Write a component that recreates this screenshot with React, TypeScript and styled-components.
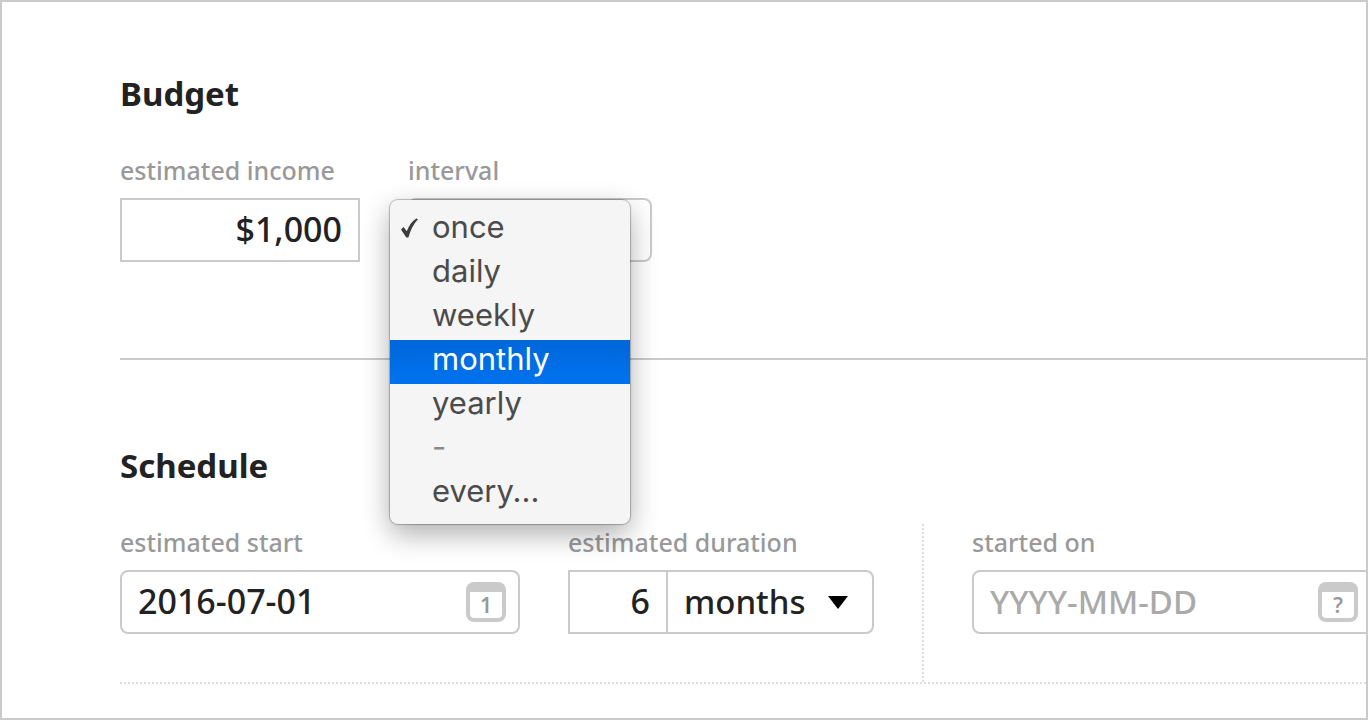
import React, { useState } from "react";
import styled, { createGlobalStyle, css } from "styled-components";

const GlobalStyle = createGlobalStyle`
  * { box-sizing: border-box; }
  body {
    margin: 0;
    background: #fff;
    color: #222;
    font-family: "Noto Sans", "Open Sans", sans-serif;
    font-weight: 500;
  }
`;

const line = "#cacaca";
const dotted = "2px dotted #dedede";

const Page = styled.main`
  min-height: 100vh;
  padding: 68px 0 34px 118px;
  border: 2px solid ${line};
  overflow: hidden;
`;

const Section = styled.section<{ $divided?: boolean }>`
  ${(p) =>
    p.$divided &&
    css`
      margin-top: 96px;
      padding-top: 82px;
      border-top: 2px solid ${line};
    `}
`;

const Heading = styled.h2`
  margin: 0 0 34px;
  font-size: 33px;
  font-weight: 700;
  line-height: 48px;
`;

const Fields = styled.div<{ $dotted?: boolean }>`
  display: flex;
  ${(p) => p.$dotted && `border-bottom: ${dotted};`}
`;

const Group = styled.div<{ $ruled?: boolean }>`
  display: flex;
  flex: none;
  gap: 48px;
  ${(p) =>
    p.$ruled &&
    css`
      padding: 0 48px 48px 0;
      margin-right: 48px;
      border-right: ${dotted};
    `}
`;

const Field = styled.div<{ $width: number }>`
  display: flex;
  flex-direction: column;
  flex: none;
  gap: 10px;
  width: ${(p) => p.$width}px;
`;

const Label = styled.label`
  color: #999;
  font-size: 25px;
  line-height: 36px;
  white-space: nowrap;
`;

const Control = styled.div`
  display: flex;
  position: relative;
`;

const boxStyle = css`
  height: 64px;
  min-width: 0;
  border: 2px solid ${line};
  background: #fff;
  color: #222;
  font: inherit;
  outline: none;
`;

const TextBox = styled.input<{ $align?: "right"; $joined?: boolean }>`
  ${boxStyle}
  flex: 1;
  padding: 0 16px 2px;
  border-radius: ${(p) => (p.$align ? 0 : 8)}px;
  font-size: 34px;
  text-align: ${(p) => p.$align || "left"};
  ${(p) => p.$joined && "border-right: 0;"}
  &::placeholder {
    color: #aaa;
    font-size: 33px;
    opacity: 1;
  }
`;

const SelectWrap = styled.div<{ $width: number }>`
  display: flex;
  align-items: center;
  position: relative;
  flex: none;
  width: ${(p) => p.$width}px;
`;

const Select = styled.select<{ $joined?: boolean }>`
  ${boxStyle}
  width: 100%;
  padding: 0 48px 2px 16px;
  border-radius: ${(p) => (p.$joined ? "0 8px 8px 0" : "8px")};
  font-size: 33px;
  appearance: none;
`;

const Arrow = styled.svg`
  position: absolute;
  right: 26px;
  pointer-events: none;
`;

const CalendarButton = styled.button`
  position: absolute;
  top: 12px;
  right: 14px;
  width: 40px;
  height: 40px;
  padding: 0;
  border: 4px solid ${line};
  border-top-width: 10px;
  border-radius: 8px;
  background: #fff;
  color: #999;
  font: 600 21px/24px "Noto Sans", sans-serif;
`;

const Menu = styled.ul`
  position: absolute;
  top: 2px;
  left: -18px;
  z-index: 1;
  width: 240px;
  margin: 0;
  padding: 8px 0;
  border-radius: 8px;
  background: #f5f5f5;
  box-shadow: 0 0 1px 1px rgba(0, 0, 0, 0.25), 0 10px 28px rgba(0, 0, 0, 0.32);
  list-style: none;
`;

const MenuItem = styled.button<{ $active?: boolean }>`
  display: flex;
  align-items: center;
  width: 100%;
  height: 44px;
  padding: 0 0 6px 10px;
  border: 0;
  background: ${(p) => (p.$active ? "linear-gradient(#0067da, #0072ef)" : "transparent")};
  color: ${(p) => (p.$active ? "#fff" : "#4b4b4b")};
  font: 400 31px/38px Inter, sans-serif;
  text-align: left;
  &:disabled {
    color: #8a8a8a;
  }
`;

const CheckSlot = styled.span`
  display: flex;
  flex: none;
  width: 32px;
`;

const DownArrow = () => (
  <Arrow width="20" height="14" viewBox="0 0 20 14" aria-hidden="true">
    <path d="M0 1h20L10 14z" fill="#000" />
  </Arrow>
);

const Check = () => (
  <svg width="20" height="24" viewBox="0 0 20 24" aria-hidden="true">
    <path d="M1 14.5 3.5 12 6.8 16.2C9.3 10.3 12 6 16.3 3.5L18 4.3C13.5 9 10.6 15 8.4 22.5H6.3Z" fill="#3c3c3c" />
  </svg>
);

const intervals = ["once", "daily", "weekly", "monthly", "yearly", "-", "every..."];

export default function App() {
  const [interval, setInterval] = useState("once");
  const [active, setActive] = useState("monthly");

  return (
    <>
      <GlobalStyle />
      <Page>
        <Section>
          <Heading>Budget</Heading>
          <Fields>
            <Group>
              <Field $width={240}>
                <Label htmlFor="income">estimated income</Label>
                <Control>
                  <TextBox id="income" $align="right" defaultValue="$1,000" />
                </Control>
              </Field>
              <Field $width={244}>
                <Label htmlFor="interval">interval</Label>
                <SelectWrap $width={244}>
                  <Select id="interval" value={interval} onChange={(e) => setInterval(e.target.value)}>
                    {intervals.map((name) => (
                      <option key={name}>{name}</option>
                    ))}
                  </Select>
                  <DownArrow />
                  <Menu aria-label="interval">
                    {intervals.map((name) => (
                      <li key={name}>
                        <MenuItem
                          type="button"
                          $active={name === active}
                          disabled={name === "-"}
                          onMouseEnter={() => setActive(name)}
                          onClick={() => setInterval(name)}
                        >
                          <CheckSlot>{name === interval && <Check />}</CheckSlot>
                          {name}
                        </MenuItem>
                      </li>
                    ))}
                  </Menu>
                </SelectWrap>
              </Field>
            </Group>
          </Fields>
        </Section>

        <Section $divided>
          <Heading>Schedule</Heading>
          <Fields $dotted>
            <Group $ruled>
              <Field $width={400}>
                <Label htmlFor="start">estimated start</Label>
                <Control>
                  <TextBox id="start" defaultValue="2016-07-01" />
                  <CalendarButton type="button" aria-label="Choose estimated start">1</CalendarButton>
                </Control>
              </Field>
              <Field $width={306}>
                <Label htmlFor="duration">estimated duration</Label>
                <Control>
                  <TextBox id="duration" $align="right" $joined defaultValue="6" />
                  <SelectWrap $width={208}>
                    <Select $joined aria-label="duration unit" defaultValue="months">
                      <option>days</option>
                      <option>weeks</option>
                      <option>months</option>
                      <option>years</option>
                    </Select>
                    <DownArrow />
                  </SelectWrap>
                </Control>
              </Field>
            </Group>
            <Group>
              <Field $width={400}>
                <Label htmlFor="started">started on</Label>
                <Control>
                  <TextBox id="started" placeholder="YYYY-MM-DD" />
                  <CalendarButton type="button" aria-label="Choose started on">?</CalendarButton>
                </Control>
              </Field>
            </Group>
          </Fields>
        </Section>
      </Page>
    </>
  );
}
